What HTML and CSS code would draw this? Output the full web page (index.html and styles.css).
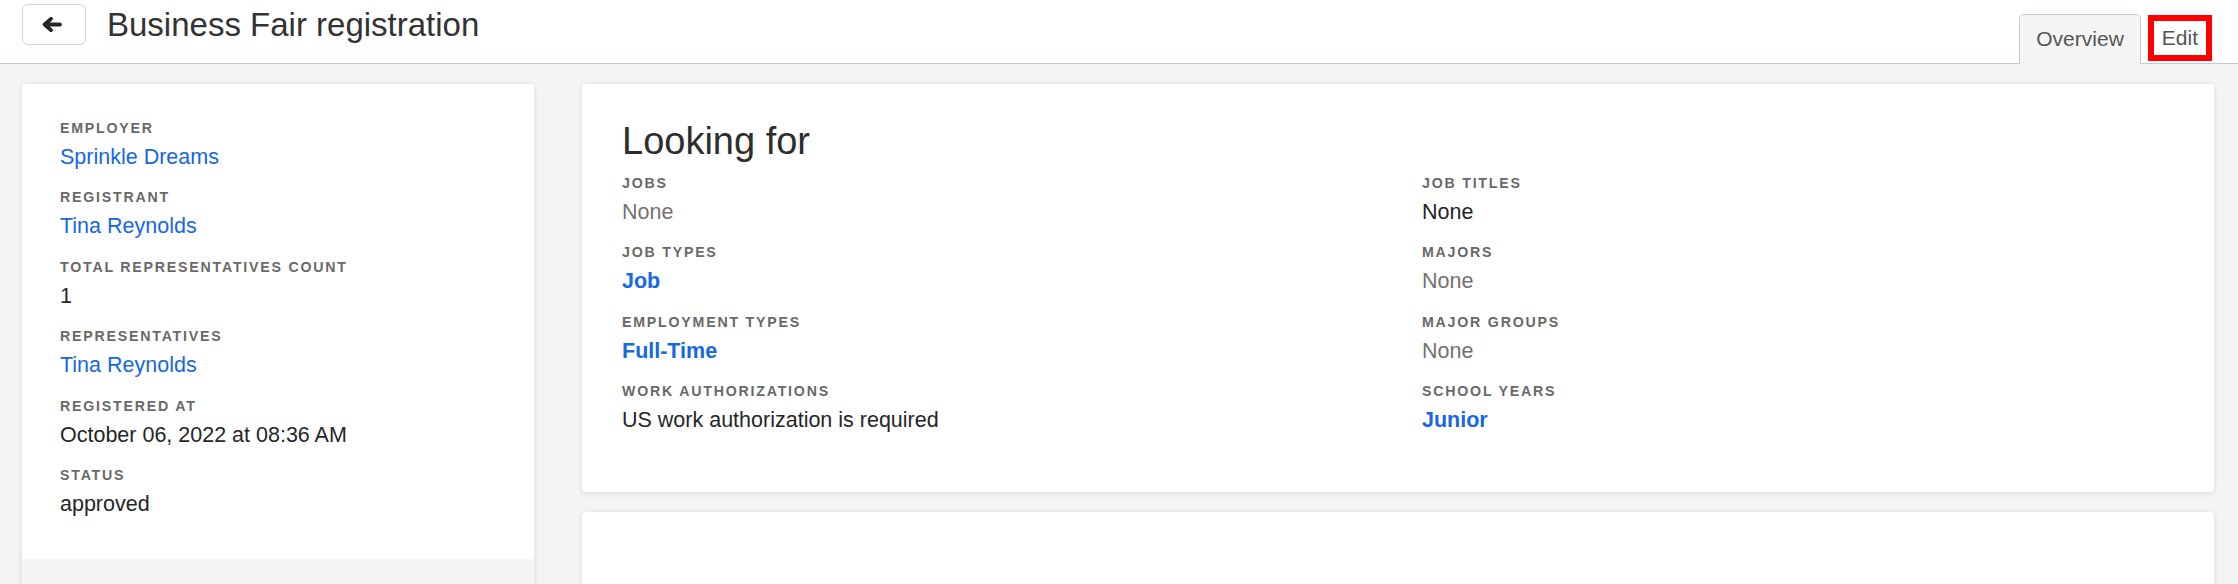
FILE: index.html
```html
<!DOCTYPE html>
<html lang="en">
<head>
<meta charset="utf-8">
<title>Business Fair registration</title>
<link rel="stylesheet" href="styles.css">
</head>
<body>
<header class="topbar">
  <div class="title-group">
    <button class="back-btn" type="button" aria-label="Back">
      <svg width="20" height="15" viewBox="0 0 20 15" aria-hidden="true">
        <path d="M18 7.5H3M9 1.8L2.6 7.5L9 13.2" fill="none" stroke="#262626" stroke-width="3.8" stroke-linecap="round" stroke-linejoin="round"/>
      </svg>
    </button>
    <h1 class="page-title">Business Fair registration</h1>
  </div>
  <nav class="tabs">
    <a class="tab tab-active" href="#">Overview</a>
    <a class="tab tab-edit" href="#">Edit</a>
  </nav>
</header>

<main class="content">
  <aside class="card side-card">
    <dl class="fields">
      <div class="field"><dt class="label">Employer</dt><dd class="value"><a class="link" href="#">Sprinkle Dreams</a></dd></div>
      <div class="field"><dt class="label">Registrant</dt><dd class="value"><a class="link" href="#">Tina Reynolds</a></dd></div>
      <div class="field"><dt class="label">Total representatives count</dt><dd class="value">1</dd></div>
      <div class="field"><dt class="label">Representatives</dt><dd class="value"><a class="link" href="#">Tina Reynolds</a></dd></div>
      <div class="field"><dt class="label">Registered at</dt><dd class="value">October 06, 2022 at 08:36 AM</dd></div>
      <div class="field"><dt class="label">Status</dt><dd class="value">approved</dd></div>
    </dl>
    <div class="card-footer"></div>
  </aside>

  <section class="main-col">
    <div class="card looking-card">
      <h2 class="card-title">Looking for</h2>
      <div class="columns">
        <dl class="fields">
          <div class="field"><dt class="label">Jobs</dt><dd class="value muted">None</dd></div>
          <div class="field"><dt class="label">Job types</dt><dd class="value"><a class="link strong" href="#">Job</a></dd></div>
          <div class="field"><dt class="label">Employment types</dt><dd class="value"><a class="link strong" href="#">Full-Time</a></dd></div>
          <div class="field"><dt class="label">Work authorizations</dt><dd class="value">US work authorization is required</dd></div>
        </dl>
        <dl class="fields">
          <div class="field"><dt class="label">Job titles</dt><dd class="value">None</dd></div>
          <div class="field"><dt class="label">Majors</dt><dd class="value muted">None</dd></div>
          <div class="field"><dt class="label">Major groups</dt><dd class="value muted">None</dd></div>
          <div class="field"><dt class="label">School years</dt><dd class="value"><a class="link strong" href="#">Junior</a></dd></div>
        </dl>
      </div>
    </div>
    <div class="card empty-card"></div>
  </section>
</main>
</body>
</html>
```

FILE: styles.css
```css
* {
  box-sizing: border-box;
}

html, body {
  margin: 0;
  padding: 0;
}

body {
  background: #f5f5f5;
  font-family: "Liberation Sans", Arial, sans-serif;
  color: #2a2a2a;
  height: 584px;
  overflow: hidden;
}

/* Header */
.topbar {
  height: 64px;
  background: #ffffff;
  border-bottom: 1px solid #c3cbd0;
  display: flex;
  align-items: flex-start;
  padding-left: 22px;
}

.title-group {
  display: flex;
  align-items: center;
  padding-top: 4px;
}

.back-btn {
  width: 64px;
  height: 41px;
  border: 1px solid #d3d3d3;
  border-radius: 6px;
  background: #ffffff;
  display: flex;
  align-items: center;
  justify-content: center;
  padding: 0 4px 0 0;
  margin: 0;
  cursor: pointer;
}

.page-title {
  margin: 0 0 0 21px;
  font-size: 33px;
  font-weight: 400;
  line-height: 41px;
  color: #333333;
}

.tabs {
  margin-left: auto;
  align-self: flex-end;
  margin-bottom: -1px;
  display: flex;
  align-items: flex-end;
  padding-right: 26px;
}

.tab {
  font-size: 21px;
  line-height: 24px;
  color: #555555;
  text-decoration: none;
}

.tab-active {
  height: 50px;
  padding: 12px 16px 0;
  background: #f5f5f5;
  border: 1px solid #c3cbd0;
  border-bottom: none;
  border-radius: 5px 5px 0 0;
}

.tab-edit {
  margin-left: 7px;
  margin-bottom: 3px;
  padding: 5px 8px;
  border: 6px solid #ff0000;
  background: #ffffff;
}

/* Content */
.content {
  display: flex;
  align-items: flex-start;
  gap: 48px;
  padding: 20px 24px 0 22px;
}

.card {
  background: #ffffff;
  border-radius: 4px;
  box-shadow: 0 1px 6px rgba(0, 0, 0, 0.12);
}

.side-card {
  width: 512px;
  flex: none;
  overflow: hidden;
}

.side-card > .fields {
  padding: 34px 38px 40px;
}

.card-footer {
  height: 60px;
  background: #f5f5f5;
}

.main-col {
  flex: 1;
  display: flex;
  flex-direction: column;
  gap: 20px;
}

.looking-card {
  padding: 34px 40px 57px;
}

.card-title {
  margin: 0 0 9px;
  font-size: 38px;
  line-height: 46px;
  font-weight: 400;
  color: #2d2d2d;
}

.columns {
  display: grid;
  grid-template-columns: 1fr 1fr;
  column-gap: 48px;
}

.empty-card {
  height: 120px;
}

/* Fields */
.fields {
  margin: 0;
  display: flex;
  flex-direction: column;
  gap: 15.4px;
}

.field {
  display: flex;
  flex-direction: column;
}

.label {
  font-size: 14.2px;
  line-height: 20px;
  font-weight: 700;
  letter-spacing: 0.125em;
  text-transform: uppercase;
  color: #696969;
  margin-bottom: 4px;
}

.value {
  margin: 0;
  font-size: 21.5px;
  line-height: 30px;
  color: #262626;
}

.value.muted {
  color: #727272;
}

.link {
  color: #1667e0;
  text-decoration: none;
}

.link.strong {
  font-weight: 700;
}
```
